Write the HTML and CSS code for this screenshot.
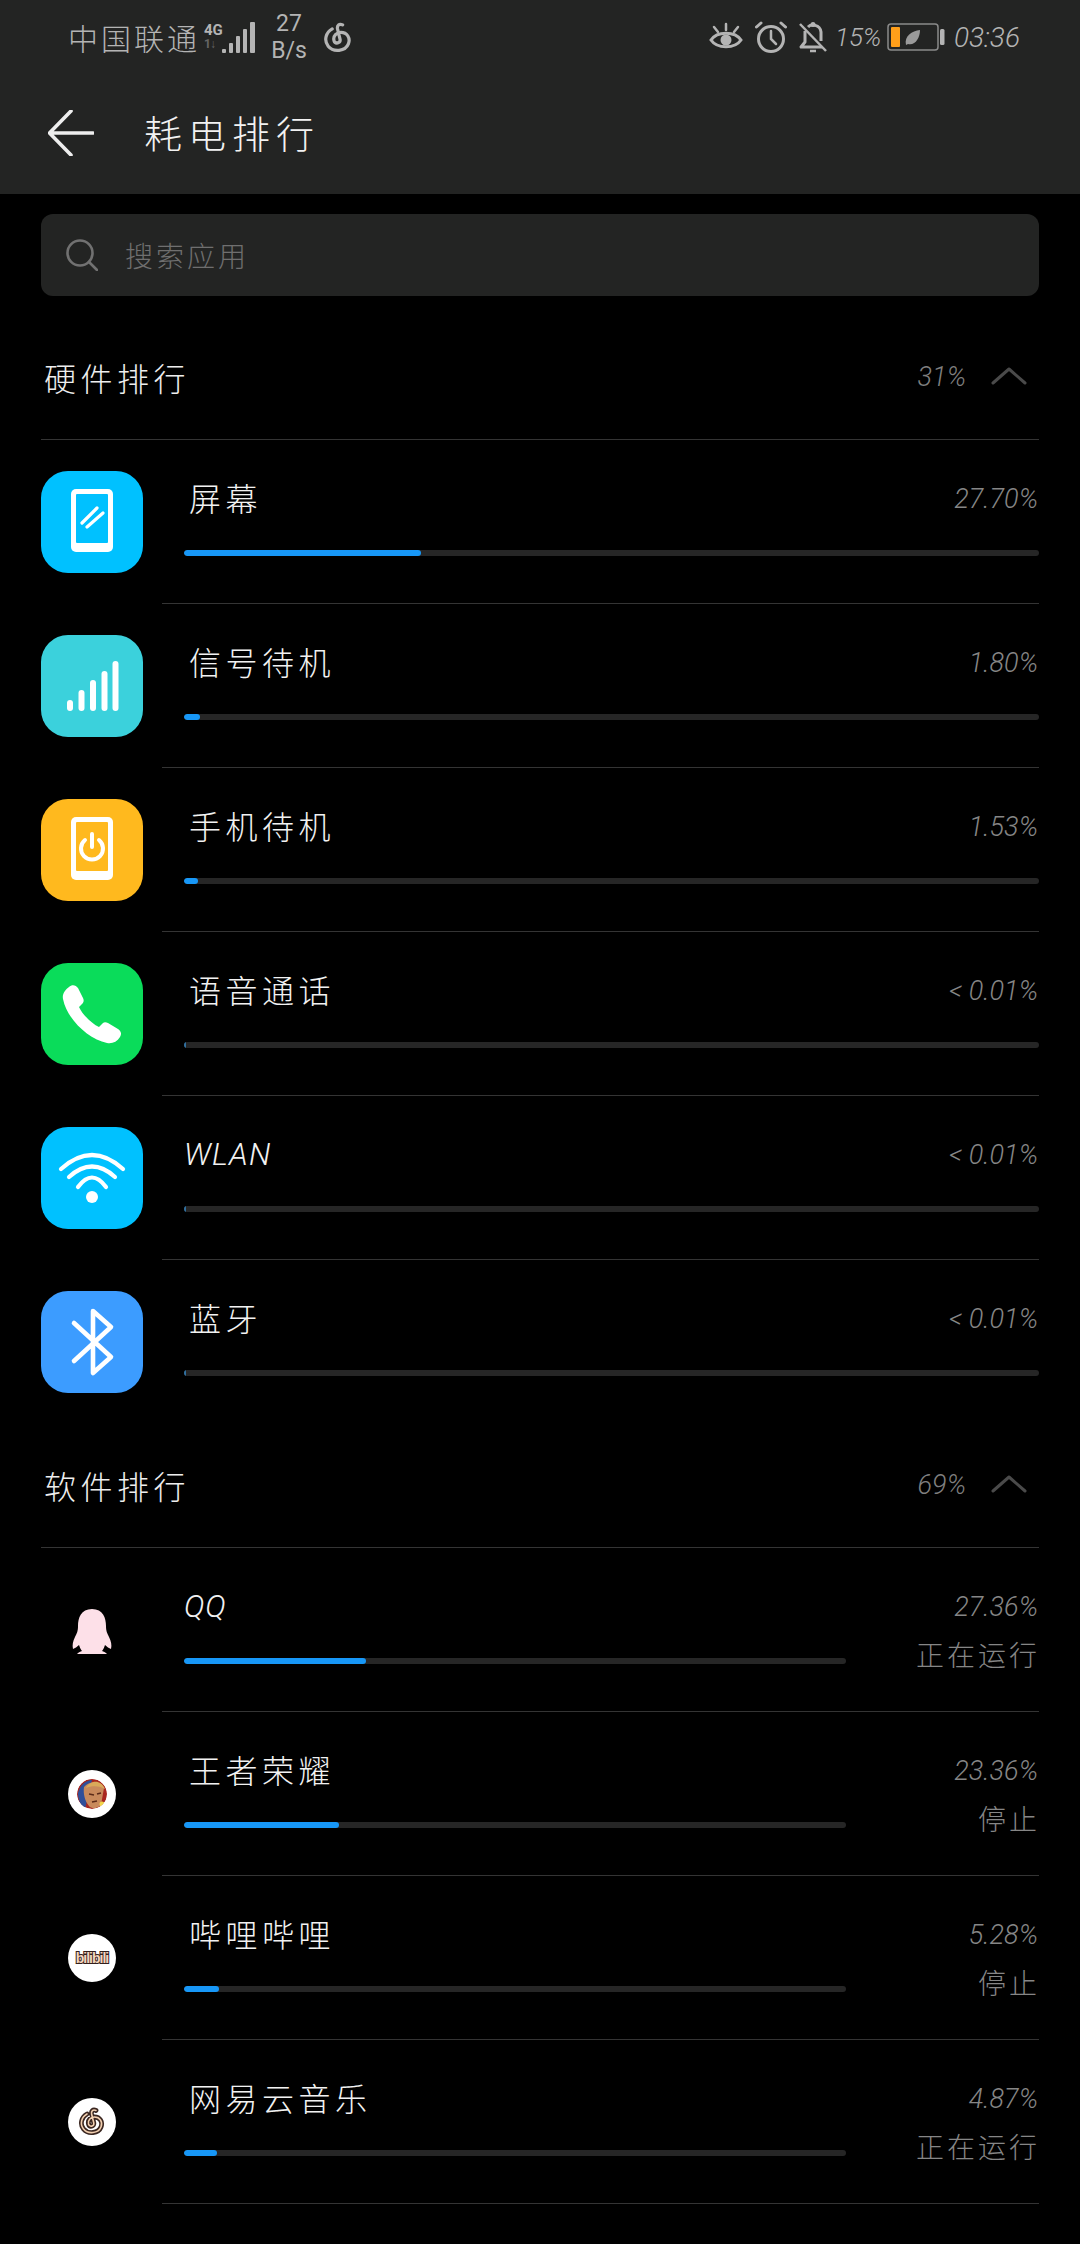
FILE: index.html
```html
<!DOCTYPE html>
<html lang="zh-CN">
<head>
<meta charset="utf-8">
<title>耗电排行</title>
<link rel="stylesheet" href="styles.css">
</head>
<body>
<header class="appbar">
  <div class="status">
    <div class="status-left">
      <span class="carrier">中国联通</span>
      <span class="net"><b>4G</b><i>1↓</i></span>
      <svg class="sig" viewBox="0 0 34 32"><rect x="0" y="27" width="4" height="4" rx="1"/><rect x="7" y="21" width="4" height="10" rx="1"/><rect x="14" y="14" width="4" height="17" rx="1"/><rect x="21" y="7" width="4" height="24" rx="1"/><rect x="28" y="0" width="5" height="31" rx="1"/></svg>
      <span class="speed">27<br>B/s</span>
      <svg class="nease" viewBox="2 1 24 26"><path d="M18 3.500C15 2 13 4 13.600 7L15.800 16C16.400 19.500 11.500 20.500 10.500 17C9.500 13 13 10 16.500 10C22 10 25 15 23 20C20.500 26.500 10 27.500 5.500 22C1.500 17 3.500 10 9 7" fill="none" stroke="currentColor" stroke-width="2.800" stroke-linecap="round"/></svg>
    </div>
    <div class="status-right">
      <svg class="st-eye" viewBox="0 0 34 30"><path d="M2 18C8 9 26 9 32 18C26 27 8 27 2 18Z" fill="none" stroke="currentColor" stroke-width="3"/><circle cx="17" cy="18" r="5.500" fill="currentColor"/><path d="M17 2V8M5 5L9 10M29 5L25 10" stroke="currentColor" stroke-width="2.500" stroke-linecap="round"/></svg>
      <svg class="st-alarm" viewBox="0 0 32 32"><circle cx="16" cy="18" r="12.500" fill="none" stroke="currentColor" stroke-width="3"/><path d="M16 10V18L21 23" fill="none" stroke="currentColor" stroke-width="2.500" stroke-linecap="round"/><path d="M1.500 6L6 2M30.500 6L26 2" stroke="currentColor" stroke-width="3" stroke-linecap="round"/></svg>
      <svg class="st-bell" viewBox="0 0 30 32"><path d="M7 10V21L3 26H24" fill="none" stroke="currentColor" stroke-width="3" stroke-linejoin="round"/><path d="M10 6C13 3 22 3 23 11V20" fill="none" stroke="currentColor" stroke-width="3"/><circle cx="15" cy="3.500" r="2.500" fill="currentColor"/><path d="M12 30H18" stroke="currentColor" stroke-width="2.500"/><path d="M2 3L28 30" stroke="currentColor" stroke-width="2.500"/></svg>
      <span class="pct">15%</span>
      <svg class="st-batt" viewBox="0 0 58 28"><rect x="1" y="1" width="50" height="26" rx="3" fill="none" stroke="#8a8a8a" stroke-width="1.500"/><rect x="4" y="4" width="9" height="20" rx="1" fill="#ff9f1a"/><path d="M19 22C17 13 25 8 33 7C33 15 28 23 21 21Z" fill="#9a9a9a"/><rect x="53" y="6" width="4.500" height="16" rx="1.500" fill="#b4b4b4"/></svg>
      <span class="clock">03:36</span>
    </div>
  </div>
  <div class="toolbar">
    <svg class="back" viewBox="0 0 46 46"><path d="M23 1L1.500 23L23 45M2 23H45" fill="none" stroke="#eee" stroke-width="3.600" stroke-linecap="round" stroke-linejoin="round"/></svg>
    <h1 class="title">耗电排行</h1>
  </div>
</header>

<main class="content">
  <div class="search">
    <svg class="search-ico" viewBox="0 0 32 32"><circle cx="14" cy="14" r="12.500" fill="none" stroke="#717171" stroke-width="2.600"/><path d="M23 23L31 31" stroke="#717171" stroke-width="2.600" stroke-linecap="round"/></svg>
    <span class="search-text">搜索应用</span>
  </div>

  <section class="sec-head">
    <span class="sec-title">硬件排行</span>
    <span class="sec-val">31%</span>
    <svg class="chev" viewBox="0 0 36 18"><path d="M2 16L18 2L34 16" fill="none" stroke="#4a4a4a" stroke-width="3" stroke-linecap="round" stroke-linejoin="round"/></svg>
  </section>

  <div class="row">
    <div class="ico-cell"><svg class="ico" viewBox="0 0 102 102"><rect width="102" height="102" rx="27" fill="#00c1ff"/><rect x="30" y="18" width="42" height="63" rx="5" fill="#fff"/><rect x="35" y="23" width="32" height="49" rx="1" fill="#00c1ff"/><path d="M41 52L56 37M46 56L62 42" stroke="#fff" stroke-width="3.200" stroke-linecap="round"/></svg></div>
    <div class="main">
      <div class="line"><span class="name cjk">屏幕</span><span class="val">27.70%</span></div>
      <div class="bar"><div class="fill" style="width:237px"></div></div>
    </div>
  </div>
  <div class="row">
    <div class="ico-cell"><svg class="ico" viewBox="0 0 102 102"><rect width="102" height="102" rx="27" fill="#3bd1dc"/><g fill="#fff"><rect x="26" y="65" width="6" height="11" rx="3"/><rect x="37.500" y="55" width="6" height="21" rx="3"/><rect x="49" y="45" width="6" height="31" rx="3"/><rect x="60.500" y="36" width="6" height="40" rx="3"/><rect x="71.500" y="26" width="6" height="50" rx="3"/></g></svg></div>
    <div class="main">
      <div class="line"><span class="name cjk">信号待机</span><span class="val">1.80%</span></div>
      <div class="bar"><div class="fill" style="width:16px"></div></div>
    </div>
  </div>
  <div class="row">
    <div class="ico-cell"><svg class="ico" viewBox="0 0 102 102"><rect width="102" height="102" rx="27" fill="#ffb91e"/><rect x="30" y="18" width="42" height="63" rx="5" fill="#fff"/><rect x="35" y="23" width="32" height="49" rx="1" fill="#ffb91e"/><path d="M44 41A11 11 0 1 0 58 41" fill="none" stroke="#fff" stroke-width="4" stroke-linecap="round"/><path d="M51 35V48" stroke="#fff" stroke-width="4" stroke-linecap="round"/></svg></div>
    <div class="main">
      <div class="line"><span class="name cjk">手机待机</span><span class="val">1.53%</span></div>
      <div class="bar"><div class="fill" style="width:14px"></div></div>
    </div>
  </div>
  <div class="row">
    <div class="ico-cell"><svg class="ico" viewBox="0 0 102 102"><rect width="102" height="102" rx="27" fill="#0adc5a"/><path d="M28 24C31 21 35 22 37 25L42 35C43 37 43 39 41 41L38 44C41 51 51 61 58 64L62 60C63 59 65 59 67 60L77 66C80 68 81 71 79 74C76 79 71 81 66 80C47 76 26 56 22 36C21 31 24 27 28 24Z" fill="#fff"/></svg></div>
    <div class="main">
      <div class="line"><span class="name cjk">语音通话</span><span class="val">&lt; 0.01%</span></div>
      <div class="bar"><div class="fill tiny"></div></div>
    </div>
  </div>
  <div class="row">
    <div class="ico-cell"><svg class="ico" viewBox="0 0 102 102"><rect width="102" height="102" rx="27" fill="#00c1ff"/><path d="M20 42Q51 14 82 42M28 50Q51 29 74 50M37 60Q51 41 65 60" fill="none" stroke="#fff" stroke-width="4.200" stroke-linecap="round"/><circle cx="51" cy="70" r="6" fill="#fff"/></svg></div>
    <div class="main">
      <div class="line"><span class="name latin">WLAN</span><span class="val">&lt; 0.01%</span></div>
      <div class="bar"><div class="fill tiny"></div></div>
    </div>
  </div>
  <div class="row last">
    <div class="ico-cell"><svg class="ico" viewBox="0 0 102 102"><rect width="102" height="102" rx="27" fill="#3c9cff"/><path d="M33 32L70 66L52 82V20L70 36L33 70" fill="none" stroke="#fff" stroke-width="4.600" stroke-linecap="round" stroke-linejoin="round"/></svg></div>
    <div class="main">
      <div class="line"><span class="name cjk">蓝牙</span><span class="val">&lt; 0.01%</span></div>
      <div class="bar"><div class="fill tiny"></div></div>
    </div>
  </div>

  <section class="sec-head">
    <span class="sec-title">软件排行</span>
    <span class="sec-val">69%</span>
    <svg class="chev" viewBox="0 0 36 18"><path d="M2 16L18 2L34 16" fill="none" stroke="#4a4a4a" stroke-width="3" stroke-linecap="round" stroke-linejoin="round"/></svg>
  </section>

  <div class="row app">
    <div class="ico-cell"><svg class="ico" viewBox="0 0 102 102"><path transform="translate(0 8)" d="M51 22C40 22 37 31 37 39C37 44 36 46 34 50C32 54 31 58 32 62C34 61 36 60 38 58C39 61 40 63 41 64C38 65 37 66 36 67H66C65 66 64 65 61 64C62 63 63 61 64 58C66 60 68 61 70 62C71 58 70 54 68 50C66 46 65 44 65 39C65 31 62 22 51 22Z" fill="#fde0e8"/></svg></div>
    <div class="main">
      <div class="line"><span class="name latin">QQ</span><span class="val">27.36%</span></div>
      <div class="bar-line"><div class="bar short"><div class="fill" style="width:182px"></div></div><span class="state">正在运行</span></div>
    </div>
  </div>
  <div class="row app">
    <div class="ico-cell"><div class="disc"><svg class="face" viewBox="0 0 30 30"><circle cx="15" cy="15" r="15" fill="#a8261f"/><path d="M1 14C3 6 9 1 15 1L8 30C4 27 1 21 1 14Z" fill="#2f4f9a"/><path d="M7 8C12 2 23 1 27 9L24 26C20 30 14 30 12 27C8 22 6 15 7 8Z" fill="#c98a5c"/><path d="M9 9C13 1 24 0 28 10C24 7 15 6 9 9Z" fill="#d9a95a"/><path d="M12 15L17 16M20 15L24 14M15 23L20 22" stroke="#5b2a18" stroke-width="1.500" fill="none"/><circle cx="25" cy="25" r="2.500" fill="#f2d64b"/></svg></div></div>
    <div class="main">
      <div class="line"><span class="name cjk">王者荣耀</span><span class="val">23.36%</span></div>
      <div class="bar-line"><div class="bar short"><div class="fill" style="width:155px"></div></div><span class="state">停止</span></div>
    </div>
  </div>
  <div class="row app">
    <div class="ico-cell"><div class="disc"><span class="bili">bilibili</span></div></div>
    <div class="main">
      <div class="line"><span class="name cjk">哔哩哔哩</span><span class="val">5.28%</span></div>
      <div class="bar-line"><div class="bar short"><div class="fill" style="width:35px"></div></div><span class="state">停止</span></div>
    </div>
  </div>
  <div class="row app">
    <div class="ico-cell"><div class="disc"><svg class="swirl" viewBox="0 0 28 30"><path d="M18 3.500C15 2 13 4 13.600 7L15.800 16C16.400 19.500 11.500 20.500 10.500 17C9.500 13 13 10 16.500 10C22 10 25 15 23 20C20.500 26.500 10 27.500 5.500 22C1.500 17 3.500 10 9 7" fill="none" stroke="#3a2620" stroke-width="4.800" stroke-linecap="round"/><path d="M18 3.500C15 2 13 4 13.600 7L15.800 16C16.400 19.500 11.500 20.500 10.500 17C9.500 13 13 10 16.500 10C22 10 25 15 23 20C20.500 26.500 10 27.500 5.500 22C1.500 17 3.500 10 9 7" fill="none" stroke="#f3d0b0" stroke-width="1.600" stroke-linecap="round"/></svg></div></div>
    <div class="main">
      <div class="line"><span class="name cjk">网易云音乐</span><span class="val">4.87%</span></div>
      <div class="bar-line"><div class="bar short"><div class="fill" style="width:33px"></div></div><span class="state">正在运行</span></div>
    </div>
  </div>
</main>
</body>
</html>
```
FILE: styles.css
```css
* { box-sizing: border-box; }
html, body { margin: 0; padding: 0; background: #000; }
body {
  width: 1080px;
  height: 2244px;
  overflow: hidden;
  color: #f0f0f0;
  font-family: "Noto Sans CJK SC", "Noto Sans", sans-serif;
  font-weight: 300;
}

.appbar { height: 194px; background: #232423; display: flex; flex-direction: column; }

.status {
  height: 74px;
  padding: 0 60px 0 68px;
  display: flex;
  align-items: flex-start;
  justify-content: space-between;
  color: #b4b4b4;
}
.status-left, .status-right { display: flex; align-items: center; height: 74px; }
.carrier { font-size: 30px; letter-spacing: 3px; line-height: 1; width: 136px; white-space: nowrap; }
.net { display: flex; flex-direction: column; width: 18px; line-height: 14px; font-family: "Roboto", sans-serif; font-size: 15px; font-style: normal; }
.net b { font-weight: 700; }
.net i { font-style: normal; color: #666; font-weight: 700; font-size: 12px; letter-spacing: -1px; }
.sig { width: 34px; height: 32px; fill: #b4b4b4; margin-top: 2px; }
.speed { font-family: "Roboto", sans-serif; font-weight: 400; font-size: 23px; line-height: 27px; text-align: center; width: 50px; margin-left: 8px; }
.nease { width: 28px; height: 30px; margin-left: 10px; color: #b4b4b4; }

.st-eye { width: 34px; height: 30px; }
.st-alarm { width: 32px; height: 32px; margin-left: 12px; }
.st-bell { width: 30px; height: 32px; margin-left: 11px; }
.pct { font-family: "Roboto", sans-serif; font-style: italic; font-weight: 300; font-size: 26px; width: 52px; margin-left: 7px; white-space: nowrap; }
.st-batt { width: 58px; height: 28px; }
.clock { font-family: "Roboto", sans-serif; font-style: italic; font-weight: 300; font-size: 28px; margin-left: 9px; white-space: nowrap; }

.toolbar { flex: 1; display: flex; align-items: center; padding: 0 0 0 48px; margin-bottom: 2px; }
.back { width: 46px; height: 46px; }
.title { margin: 0 0 2px 50px; font-size: 38px; letter-spacing: 6px; font-weight: 300; line-height: 1; color: #f2f2f2; }

.content { padding: 20px 41px 0 41px; }

.search {
  height: 82px;
  background: #232423;
  border-radius: 12px;
  display: flex;
  align-items: center;
  padding-left: 25px;
  margin-bottom: 20px;
}
.search-ico { width: 32px; height: 32px; }
.search-text { margin-left: 27px; font-size: 28px; letter-spacing: 3px; color: #6f6f6f; line-height: 1; }

.sec-head {
  height: 124px;
  display: flex;
  align-items: center;
  border-bottom: 1px solid #343434;
  padding-left: 3px;
}
.sec-title { font-size: 32px; letter-spacing: 4.500px; flex: 1; color: #eee; line-height: 1; margin-bottom: 2px; }
.sec-val { font-family: "Roboto", sans-serif; font-style: italic; font-weight: 300; font-size: 27px; color: #7f7f7f; line-height: 1; }
.chev { width: 36px; height: 18px; margin: 0 12px 4px 25px; }

.row { height: 164px; display: flex; }
.ico-cell { width: 121px; flex: none; display: flex; align-items: center; }
.ico { width: 102px; height: 102px; display: block; }
.main {
  flex: 1;
  min-width: 0;
  border-bottom: 1px solid #343434;
  padding: 37px 0 0 22px;
}
.row.last .main { border-bottom-color: transparent; }

.line { height: 40px; display: flex; align-items: center; justify-content: space-between; }
.name { line-height: 40px; color: #f2f2f2; white-space: nowrap; }
.name.cjk { font-size: 32px; letter-spacing: 4.500px; padding-left: 5px; }
.name.latin { font-family: "Roboto", sans-serif; font-style: italic; font-weight: 300; font-size: 31px; letter-spacing: 1px; margin-top: 4px; }
.val { font-family: "Roboto", sans-serif; font-style: italic; font-weight: 300; font-size: 27px; color: #868686; line-height: 40px; padding-right: 1px; margin-top: 4px; white-space: nowrap; }

.bar { height: 6px; border-radius: 3px; background: #262626; margin-top: 33px; overflow: hidden; }
.fill { height: 100%; background: #1797f7; border-radius: 3px; }
.fill.tiny { width: 2px; background: #2f6f9f; border-radius: 0; }

.bar-line { height: 6px; margin-top: 33px; display: flex; align-items: center; justify-content: space-between; }
.bar.short { width: 662px; margin-top: 0; flex: none; }
.state { font-size: 28px; letter-spacing: 3px; color: #868686; line-height: 40px; margin: 0 -1px 14px 0; white-space: nowrap; }

.disc {
  width: 48px;
  height: 48px;
  margin-left: 27px;
  border-radius: 50%;
  background: #fff;
  display: flex;
  align-items: center;
  justify-content: center;
}
.face { width: 30px; height: 30px; border-radius: 50%; }
.swirl { width: 28px; height: 30px; }
.bili {
  font-family: "Liberation Sans", sans-serif;
  font-weight: 700;
  font-size: 14px;
  letter-spacing: -1px;
  color: #f3d6bf;
  -webkit-text-stroke: 2px #33201c;
  paint-order: stroke fill;
  line-height: 1;
}
```
